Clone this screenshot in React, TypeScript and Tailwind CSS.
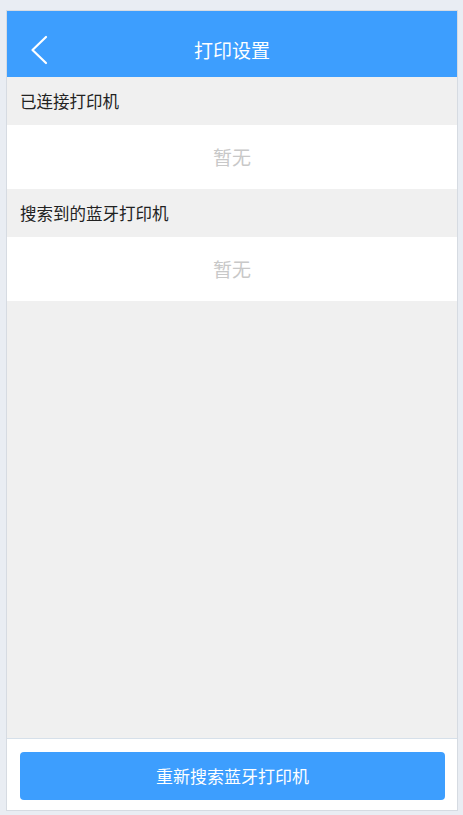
const sections = [
  { title: "已连接打印机", empty: "暂无" },
  { title: "搜索到的蓝牙打印机", empty: "暂无" },
];

export default function App() {
  return (
    <div
      className="min-h-screen bg-[#e9edf3] pt-[10px] pl-[6px] pr-[5px]"
      style={{ fontFamily: '"Noto Sans CJK SC", "Noto Sans", sans-serif' }}
    >
      <div className="flex h-[801px] flex-col border border-[#d6dbe2] bg-[#f0f0f0]">
        <header className="relative flex h-[66px] shrink-0 items-center justify-center bg-[#3d9efe] pt-[12px]">
          <button className="absolute left-[22px] top-[24px]">
            <svg width="20" height="30" viewBox="0 0 20 30" fill="none">
              <path
                d="M17 2L3.5 15L17 28"
                stroke="white"
                strokeWidth="2.2"
                strokeLinecap="round"
                strokeLinejoin="round"
              />
            </svg>
          </button>
          <h1 className="text-[19px] text-white">打印设置</h1>
        </header>

        <main className="flex-1">
          {sections.map((s) => (
            <div key={s.title}>
              <div className="flex h-[48px] items-center px-[13px] text-[16.5px] text-[#222]">
                {s.title}
              </div>
              <div className="flex h-[64px] items-center justify-center bg-white text-[19px] text-[#c8c8c8]">
                {s.empty}
              </div>
            </div>
          ))}
        </main>

        <footer className="h-[72px] shrink-0 border-t border-[#d6e0ea] bg-white pl-[13px] pr-[12px] pt-[13px]">
          <button className="flex h-[48px] w-full items-center justify-center rounded-[4px] bg-[#3d9efe] text-[17px] text-white">
            重新搜索蓝牙打印机
          </button>
        </footer>
      </div>
    </div>
  );
}
